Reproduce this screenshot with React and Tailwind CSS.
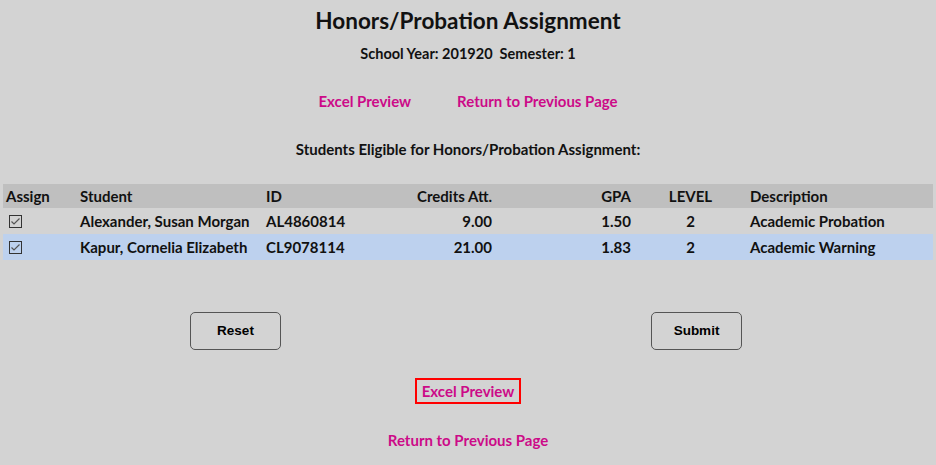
import { useState } from 'react';

const ROWS = [
  { name: 'Alexander, Susan Morgan', id: 'AL4860814', credits: '9.00', gpa: '1.50', level: '2', desc: 'Academic Probation' },
  { name: 'Kapur, Cornelia Elizabeth', id: 'CL9078114', credits: '21.00', gpa: '1.83', level: '2', desc: 'Academic Warning' },
];

const COLS = 'grid grid-cols-[77px_186px_110px_116px_139px_119px_1fr]';

function Check({ checked, onChange }) {
  return (
    <button
      onClick={onChange}
      className="w-[13px] h-[13px] border border-[#333] bg-transparent flex items-center justify-center"
    >
      {checked && (
        <svg width="11" height="11" viewBox="0 0 11 11">
          <path d="M1.5 5.5 L4 8 L9.5 2.5" fill="none" stroke="#555" strokeWidth="1.2" />
        </svg>
      )}
    </button>
  );
}

export default function App() {
  const [checked, setChecked] = useState([true, true]);
  const toggle = (i) => setChecked((c) => c.map((v, j) => (j === i ? !v : v)));

  return (
    <div className="min-h-[465px] bg-[#d3d3d3] text-[#111] font-['Lato',sans-serif] flex flex-col items-center pt-[7px]">
      <h1 className="text-[22.5px] font-bold leading-[28px]">Honors/Probation Assignment</h1>
      <p className="mt-[10px] text-[14.5px] font-bold leading-[18px]">School Year: 201920&nbsp;&nbsp;Semester: 1</p>

      <div className="mt-[29px] flex gap-[46px] text-[15px] font-bold text-[#cc0a88] leading-[18px]">
        <a href="#">Excel Preview</a>
        <a href="#">Return to Previous Page</a>
      </div>

      <p className="mt-[30px] text-[15px] font-bold leading-[18px]">Students Eligible for Honors/Probation Assignment:</p>

      <div className="mt-[26px] w-[930px] text-[15px] font-bold">
        <div className={`${COLS} h-[24px] items-center bg-[#bfbfbf]`}>
          <span className="pl-[3px]">Assign</span>
          <span>Student</span>
          <span>ID</span>
          <span className="text-right">Credits Att.</span>
          <span className="text-right">GPA</span>
          <span className="text-center">LEVEL</span>
          <span>Description</span>
        </div>
        {ROWS.map((r, i) => (
          <div
            key={r.id}
            className={`${COLS} h-[26px] items-center ${i === 1 ? 'bg-[#bdd1ee]' : ''}`}
          >
            <span className="pl-[6px]"><Check checked={checked[i]} onChange={() => toggle(i)} /></span>
            <span>{r.name}</span>
            <span>{r.id}</span>
            <span className="text-right">{r.credits}</span>
            <span className="text-right">{r.gpa}</span>
            <span className="text-center">{r.level}</span>
            <span>{r.desc}</span>
          </div>
        ))}
      </div>

      <div className="mt-[52px] w-[556px] pr-[4px] flex justify-between font-['Liberation_Sans',sans-serif] text-[13.5px] font-bold text-black">
        <button className="w-[91px] h-[38px] rounded-[5px] border border-[#555] bg-transparent">Reset</button>
        <button className="w-[91px] h-[38px] rounded-[5px] border border-[#555] bg-transparent">Submit</button>
      </div>

      <a href="#" className="mt-[28px] px-[5px] h-[26px] flex items-center border-2 border-[#ff0000] text-[15px] font-bold text-[#cc0a88]">
        Excel Preview
      </a>

      <a href="#" className="mt-[27px] text-[15px] font-bold text-[#cc0a88] leading-[18px]">Return to Previous Page</a>
    </div>
  );
}
